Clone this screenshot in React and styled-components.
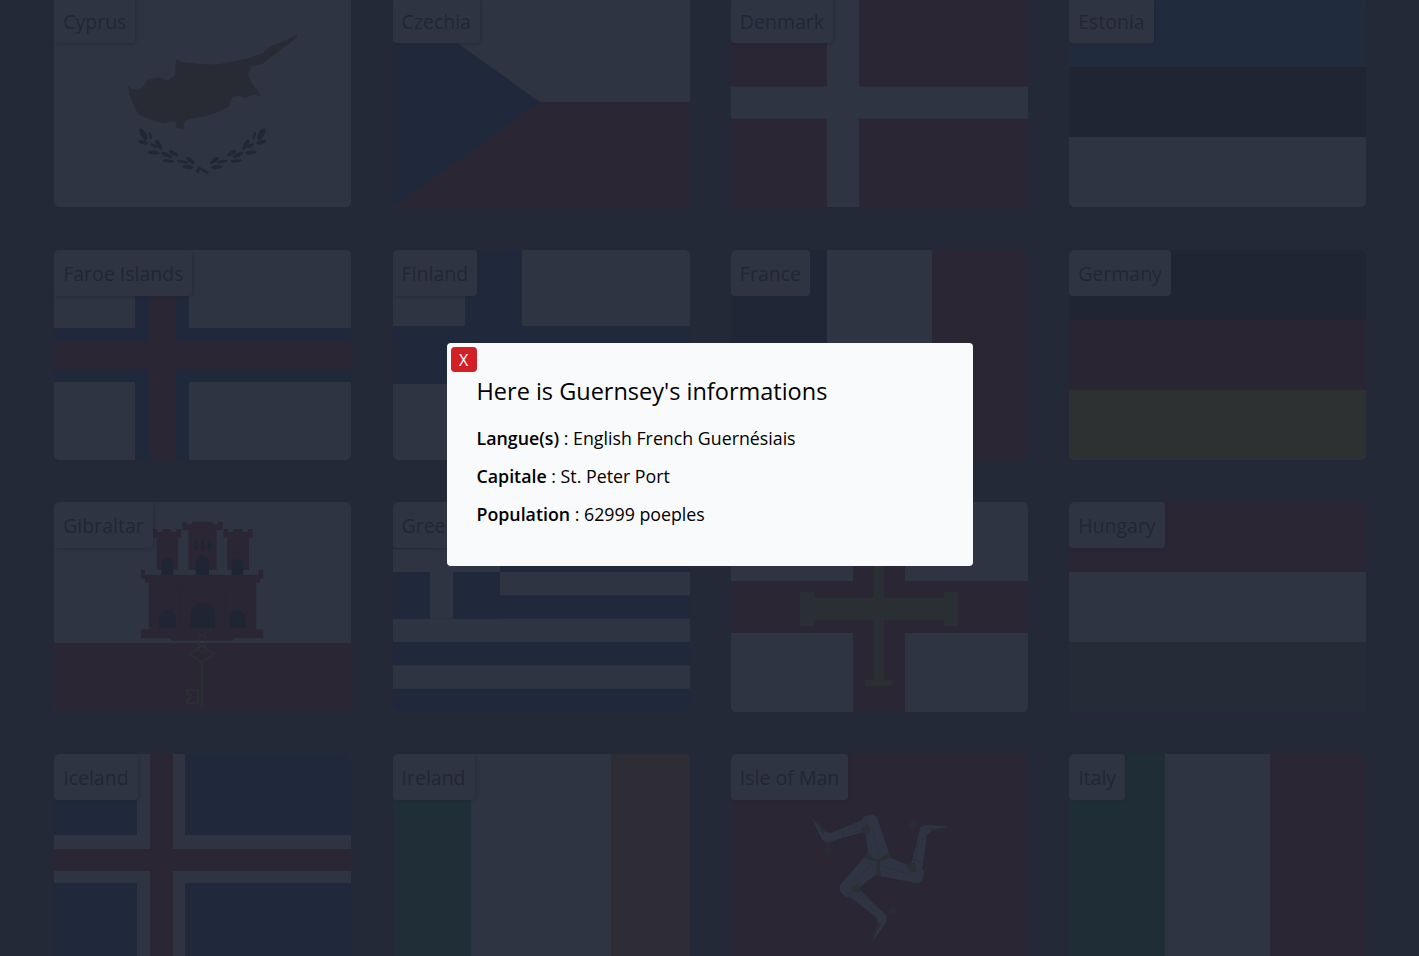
import styled, { createGlobalStyle } from "styled-components";

const GlobalStyle = createGlobalStyle`
  html, body { margin: 0; padding: 0; height: 100%; overflow: hidden; }
  body { font-family: "Open Sans", "Noto Sans", "Liberation Sans", sans-serif; background: #524f60; }
`;

const Page = styled.div`
  height: 956px;
  overflow: hidden;
`;

const Grid = styled.main`
  display: grid;
  grid-template-columns: repeat(4, 297px);
  grid-auto-rows: 210px;
  justify-content: space-between;
  row-gap: 42.2px;
  padding: 0 52.8px 0 54.2px;
  margin-top: -2.6px;
`;

const Card = styled.article`
  position: relative;
  border-radius: 6px;
  overflow: hidden;
  background: #fff;
  box-shadow: 0 1px 3px rgba(0, 0, 0, 0.3);
`;

const FlagSvg = styled.svg`
  display: block;
  width: 100%;
  height: 100%;
`;

const Label = styled.span`
  position: absolute;
  top: 0;
  left: 0;
  box-sizing: border-box;
  height: 46px;
  padding: 2px 9px 0;
  display: flex;
  align-items: center;
  font-size: 19.5px;
  color: #111827;
  background: #fff;
  border-radius: 4px;
  box-shadow: 1px 1px 4px rgba(0, 0, 0, 0.7);
`;

const Overlay = styled.div`
  position: fixed;
  inset: 0;
  background: rgba(33, 39, 53, 0.94);
  display: flex;
  justify-content: center;
  align-items: flex-start;
  padding-top: 343px;
`;

const Modal = styled.section`
  position: relative;
  box-sizing: border-box;
  width: 526px;
  height: 223px;
  padding: 30px 30px 0;
  background: #f9fafb;
  border-radius: 4px;
  color: #000;
`;

const CloseButton = styled.button`
  position: absolute;
  top: 4px;
  left: 4px;
  width: 26px;
  height: 25px;
  padding: 0;
  border: 0;
  border-radius: 4px;
  background: #d32027;
  color: #fff;
  font: 16px "Open Sans", sans-serif;
`;

const Title = styled.h2`
  margin: 0 0 15px;
  font-size: 23.5px;
  line-height: 36px;
  font-weight: 400;
`;

const Info = styled.p`
  margin: 0 0 10px;
  font-size: 17.8px;
  line-height: 28px;
  b { font-weight: 600; }
`;

const WHITE = "#ffffff";
const RED = "#c8102e";
const BLUE = "#0a4a9a";
const NAVY = "#00205b";
const GOLD = "#b0a014";
const BLACK = "#000000";

function Flag({ children, bg = WHITE }) {
  return (
    <FlagSvg viewBox="0 0 297 210" preserveAspectRatio="none">
      <rect width="297" height="210" fill={bg} />
      {children}
    </FlagSvg>
  );
}

const HStripes = ({ colors, cuts = [70, 140] }) => {
  const edges = [0, ...cuts, 210];
  return colors.map((c, i) => (
    <rect key={i} x="0" y={edges[i]} width="297" height={edges[i + 1] - edges[i]} fill={c} />
  ));
};

const VStripes = ({ colors, cuts }) => {
  const edges = [0, ...cuts, 297];
  return colors.map((c, i) => (
    <rect key={i} x={edges[i]} y="0" width={edges[i + 1] - edges[i]} height="210" fill={c} />
  ));
};

const Cross = ({ x1, x2, y1, y2, fill }) => (
  <>
    <rect x={x1} y="0" width={x2 - x1} height="210" fill={fill} />
    <rect x="0" y={y1} width="297" height={y2 - y1} fill={fill} />
  </>
);

// leaves of one wreath branch, in 3x crop coordinates
const LEAVES = [
  [430, 404, 9, 20, -30], [430, 428, 15, 6, 15], [451, 408, 4, 12, -15], [476, 435, 7, 18, -30],
  [462, 438, 12, 5, 30], [461, 459, 18, 6, 5], [500, 466, 18, 6, 25], [520, 461, 15, 6, 30],
  [505, 484, 18, 5, 5], [548, 486, 18, 5, 10], [571, 483, 16, 6, 40], [564, 502, 18, 6, 5],
];

function CyprusArt() {
  return (
    <g transform="translate(-54 2.6) scale(0.3333)">
      <path
        fill="#9a6a10"
        d="M383 258 400 270 425 265 445 240 475 233 505 243 525 225 528 178 550 188 600 193 650 195 700 185 745 175 790 160 810 140 850 125 895 103 890 115 850 145 810 175 785 195 755 200 745 225 755 250 785 290 760 285 735 295 715 288 695 295 688 320 660 335 620 350 580 355 555 365 550 390 530 385 525 365 490 372 450 360 415 345 400 315 388 285Z"
      />
      <g fill="#2e3d18">
        {LEAVES.map(([x, y, rx, ry, r], i) => (
          <g key={i}>
            <ellipse cx={x} cy={y} rx={rx} ry={ry} transform={`rotate(${r} ${x} ${y})`} />
            <ellipse cx={1214 - x} cy={y} rx={rx} ry={ry} transform={`rotate(${-r} ${1214 - x} ${y})`} />
          </g>
        ))}
        <path d="M585 515 597 500 628 518 620 524 600 510 595 524Z" />
      </g>
    </g>
  );
}

function GibraltarArt() {
  const tower = (x, w, capX, capW, top) => (
    <>
      <rect x={x} y={top + 20} width={w} height={210 - top - 20} />
      <path d={`M${capX} ${top}h14v8h16v-8h${capW - 60}v8h16v-8h14v26h-${capW}z`} />
    </>
  );
  return (
    <g transform="translate(-4 -2) scale(0.3333)">
      <rect x="0" y="429" width="930" height="220" fill={RED} />
      <g fill={RED}>
        {tower(320, 65, 308, 85, 87)}
        {tower(532, 65, 520, 88, 87)}
        {tower(415, 85, 397, 121, 65)}
        <path d="M273 210h12v14h340v-14h15v26h-10v12h-11v140h21v27h-90v7H363v-7h-90v-27h23V248h-11v-12h-12z" />
      </g>
      <g fill={BLACK}>
        <path d="M422 385v-40a36 36 0 0 1 73 0v40z" />
        <path d="M328 385v-30a25 25 0 0 1 50 0v30z" />
        <path d="M537 385v-30a25 25 0 0 1 50 0v30z" />
        <path d="M437 225v-40a20 20 0 0 1 40 0v40z" />
        <path d="M334 225v-35a18 18 0 0 1 36 0v35z" />
        <path d="M545 225v-35a18 18 0 0 1 35 0v35z" />
        <rect x="432" y="120" width="10" height="30" />
        <rect x="453" y="120" width="10" height="30" />
        <rect x="473" y="120" width="10" height="30" />
      </g>
      <g fill="none" stroke={BLACK} strokeOpacity=".45" strokeWidth="2">
        <path d="M370 250l20 12v125M545 250l-20 12v125M390 262h135" />
      </g>
      <g fill="none" stroke={GOLD} strokeWidth="6">
        <path d="M425 384l32 22 32-22" strokeWidth="3" />
        <rect x="447" y="406" width="20" height="50" rx="8" strokeWidth="4" />
        <path d="M456 437l37 25-37 25-37-25z" />
        <path d="M456 490v130" strokeWidth="8" />
        <path d="M411 571h33v38h-33v-12h10v-14h-10z" fill="none" strokeWidth="6" />
      </g>
    </g>
  );
}

function GreeceArt() {
  const h = 210 / 9;
  return (
    <>
      {Array.from({ length: 5 }, (_, i) => (
        <rect key={i} x="0" y={h * (i * 2)} width="297" height={h} fill={BLUE} />
      ))}
      <rect width="107" height={h * 5} fill={BLUE} />
      <rect x="37" width="23" height={h * 5} fill={WHITE} />
      <rect y={h * 2} width="107" height={h} fill={WHITE} />
    </>
  );
}

function GuernseyArt() {
  return (
    <>
      <Cross x1={122} x2={174} y1={79} y2={131} fill={RED} />
      <path
        fill={GOLD}
        d="M143 62h10v34h60v-6h14v34h-14v-6h-60v60h9v6h-28v-6h9v-60H83v6H69V90h14v6h60z"
      />
    </>
  );
}

function IsleOfManArt() {
  const leg = (
    <g>
      <path
        fill={WHITE}
        stroke={BLACK}
        strokeOpacity=".5"
        strokeWidth=".7"
        d="M158 98 146 63Q142 59 137 61 131 62 131 66L126 68 99 79 92 76 82 65 81 65 91 86 96 89 112 84 134 78 137 100 147 108Z"
      />
      <path fill="none" stroke={BLACK} strokeOpacity=".5" strokeWidth=".6" d="M125 69l3 12M113 83l-2-6M142 74l6 28M135 67l-2 12M118 80l16-5" />
      <path fill={GOLD} opacity=".7" d="M130 75l6-5 4 4-3 7-6-1zM88 73l3 8 3-2-3-7zM86 68l2 5 1.500-1-2-5z" />
      <path fill={GOLD} opacity=".7" d="M97 90l2 4 4 .5-3 2.500 .500 4-3.500-2-3.500 2 1-4-3-2.500 4-.500z" />
      <path fill={GOLD} opacity=".7" d="M137 100 147 108 158 98 159 100 148 111 135 103z" />
    </g>
  );
  return (
    <>
      <circle cx="147" cy="108" r="13" fill={WHITE} />
      {leg}
      <g transform="rotate(120 147 108)">{leg}</g>
      <g transform="rotate(240 147 108)">{leg}</g>
    </>
  );
}

const COUNTRIES = [
  { name: "Cyprus", art: <CyprusArt /> },
  {
    name: "Czechia",
    art: (
      <>
        <rect y="105" width="297" height="105" fill={RED} />
        <path d="M0 0 147 105 0 210Z" fill={BLUE} />
      </>
    ),
  },
  { name: "Denmark", bg: RED, art: <Cross x1={96} x2={128} y1={89.6} y2={121.6} fill={WHITE} /> },
  { name: "Estonia", art: <HStripes colors={["#1a62c8", BLACK, WHITE]} /> },
  {
    name: "Faroe Islands",
    art: (
      <>
        <Cross x1={81} x2={135} y1={78} y2={132} fill={BLUE} />
        <Cross x1={95} x2={122} y1={92} y2={119} fill={RED} />
      </>
    ),
  },
  { name: "Finland", art: <Cross x1={72} x2={129} y1={76} y2={134} fill={BLUE} /> },
  { name: "France", art: <VStripes colors={[NAVY, WHITE, RED]} cuts={[96, 201]} /> },
  { name: "Germany", art: <HStripes colors={[BLACK, "#b00000", "#ffcc00"]} /> },
  { name: "Gibraltar", art: <GibraltarArt /> },
  { name: "Greece", art: <GreeceArt /> },
  { name: "Guernsey", art: <GuernseyArt /> },
  { name: "Hungary", art: <HStripes colors={[RED, WHITE, "#477050"]} /> },
  {
    name: "Iceland",
    bg: BLUE,
    art: (
      <>
        <Cross x1={83} x2={131} y1={81} y2={129} fill={WHITE} />
        <Cross x1={96} x2={119} y1={95} y2={117} fill={RED} />
      </>
    ),
  },
  { name: "Ireland", art: <VStripes colors={["#169b62", WHITE, "#ff883e"]} cuts={[78, 218]} /> },
  { name: "Isle of Man", bg: RED, art: <IsleOfManArt /> },
  { name: "Italy", art: <VStripes colors={["#008c45", WHITE, RED]} cuts={[96, 201]} /> },
];

export default function App() {
  return (
    <Page>
      <GlobalStyle />
      <Grid>
        {COUNTRIES.map((c) => (
          <Card key={c.name}>
            <Flag bg={c.bg}>{c.art}</Flag>
            <Label>{c.name}</Label>
          </Card>
        ))}
      </Grid>
      <Overlay>
        <Modal>
          <CloseButton>X</CloseButton>
          <Title>Here is Guernsey's informations</Title>
          <Info><b>Langue(s)</b> : English French Guernésiais</Info>
          <Info><b>Capitale</b> : St. Peter Port</Info>
          <Info><b>Population</b> : 62999 poeples</Info>
        </Modal>
      </Overlay>
    </Page>
  );
}
